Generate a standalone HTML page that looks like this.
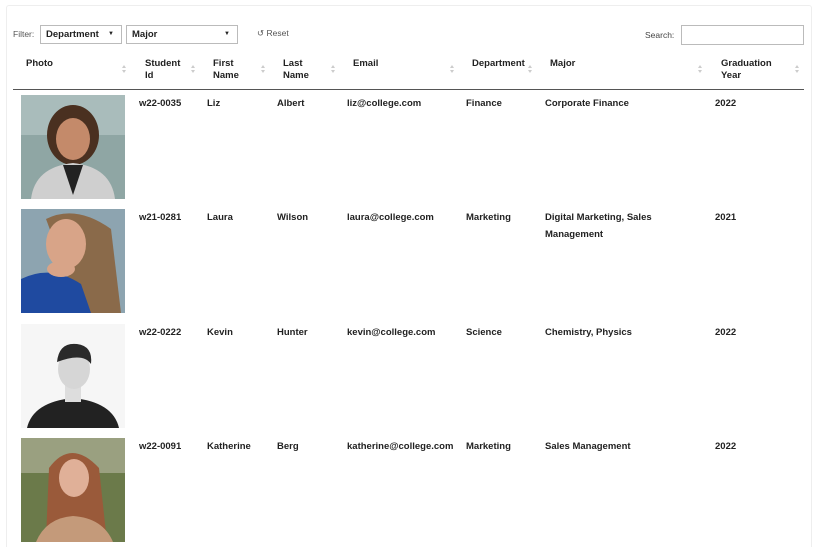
<!DOCTYPE html>
<html style="overflow:hidden;height:547px"><head><style>
*{margin:0;padding:0;box-sizing:border-box}
body{width:820px;height:547px;background:#fff;font-family:"Liberation Sans",sans-serif;color:#222;position:relative;overflow:hidden}
.card{position:absolute;left:6px;top:5px;width:806px;height:542px;border:1px solid #eee;border-bottom:none;border-radius:3px 3px 0 0}
.a{position:absolute;font-size:9.5px;font-weight:bold;line-height:13px;white-space:nowrap}
.h{position:absolute;font-size:9.5px;font-weight:bold;line-height:12px}
.s{position:absolute;width:5px;height:10px}
.s:before,.s:after{content:"";position:absolute;left:0;border-left:2.5px solid transparent;border-right:2.5px solid transparent}
.s:before{top:0;border-bottom:3px solid #ccc}
.s:after{top:5px;border-top:3px solid #ccc}
.sel{position:absolute;top:25px;height:19px;border:1px solid #bbb;font-size:9.5px;font-weight:bold;line-height:17px;padding-left:5px}
.sel span{position:absolute;right:7px;font-size:6px}
.ph{position:absolute;left:21px;width:104px;height:104px}
</style></head><body>
<div class="card"></div>
<div class="a" style="left:13px;top:28px;font-weight:normal;color:#555;font-size:8.5px">Filter:</div>
<div class="sel" style="left:40px;width:82px">Department<span>▼</span></div>
<div class="sel" style="left:126px;width:112px">Major<span>▼</span></div>
<div class="a" style="left:257px;top:27px;font-weight:normal;color:#555;font-size:8.5px">↺ Reset</div>
<div class="a" style="left:645px;top:29px;font-weight:normal;color:#444;font-size:8.5px">Search:</div>
<div style="position:absolute;left:681px;top:25px;width:123px;height:20px;border:1px solid #bbb"></div>

<div class="h" style="left:26px;top:58px">Photo</div>
<div class="h" style="left:145px;top:58px">Student<br>Id</div>
<div class="h" style="left:213px;top:58px">First<br>Name</div>
<div class="h" style="left:283px;top:58px">Last<br>Name</div>
<div class="h" style="left:353px;top:58px">Email</div>
<div class="h" style="left:472px;top:58px">Department</div>
<div class="h" style="left:550px;top:58px">Major</div>
<div class="h" style="left:721px;top:58px">Graduation<br>Year</div>
<div class="s" style="left:122px;top:65px"></div>
<div class="s" style="left:191px;top:65px"></div>
<div class="s" style="left:261px;top:65px"></div>
<div class="s" style="left:331px;top:65px"></div>
<div class="s" style="left:450px;top:65px"></div>
<div class="s" style="left:528px;top:65px"></div>
<div class="s" style="left:698px;top:65px"></div>
<div class="s" style="left:795px;top:65px"></div>
<div style="position:absolute;left:13px;top:89px;width:791px;height:1px;background:#555"></div>

<svg class="ph" style="top:95px" viewBox="0 0 104 104"><rect width="104" height="104" fill="#8fa6a4"/><rect width="104" height="40" fill="#a9bcbb"/><ellipse cx="52" cy="40" rx="26" ry="30" fill="#4a3020"/><ellipse cx="52" cy="44" rx="17" ry="21" fill="#c48a6a"/><path d="M10 104 Q14 72 52 68 Q90 72 94 104Z" fill="#cfcfcf"/><path d="M42 70 L52 100 L62 70Z" fill="#222"/></svg>
<svg class="ph" style="top:209px" viewBox="0 0 104 104"><rect width="104" height="104" fill="#8da4b0"/><path d="M25 10 Q55 -5 90 20 L100 104 L60 104Z" fill="#8a6a4a"/><ellipse cx="45" cy="35" rx="20" ry="25" fill="#d8a488"/><path d="M0 70 Q30 55 60 75 L70 104 L0 104Z" fill="#1f4aa0"/><ellipse cx="40" cy="60" rx="14" ry="8" fill="#d8a488"/></svg>
<svg class="ph" style="top:324px" viewBox="0 0 104 104"><rect width="104" height="104" fill="#f6f6f6"/><path d="M6 104 Q12 78 52 74 Q92 78 98 104Z" fill="#222"/><rect x="44" y="60" width="16" height="18" fill="#ddd"/><ellipse cx="53" cy="45" rx="16" ry="20" fill="#d6d6d6"/><path d="M36 38 Q38 18 56 20 Q72 22 70 40 Q62 28 36 38Z" fill="#2a2a2a"/></svg>
<svg class="ph" style="top:438px" viewBox="0 0 104 104"><rect width="104" height="104" fill="#6b7a4a"/><rect width="104" height="35" fill="#9aa080"/><path d="M28 30 Q50 0 78 30 L85 95 L25 100Z" fill="#9a5a3a"/><ellipse cx="53" cy="40" rx="15" ry="19" fill="#e0b098"/><path d="M15 104 Q25 80 52 78 Q82 80 92 104Z" fill="#c49a7a"/></svg>

<div class="a" style="left:139px;top:97px">w22-0035</div><div class="a" style="left:207px;top:97px">Liz</div><div class="a" style="left:277px;top:97px">Albert</div><div class="a" style="left:347px;top:97px">liz@college.com</div><div class="a" style="left:466px;top:97px">Finance</div><div class="a" style="left:545px;top:97px">Corporate Finance</div><div class="a" style="left:715px;top:97px">2022</div>
<div class="a" style="left:139px;top:211px">w21-0281</div><div class="a" style="left:207px;top:211px">Laura</div><div class="a" style="left:277px;top:211px">Wilson</div><div class="a" style="left:347px;top:211px">laura@college.com</div><div class="a" style="left:466px;top:211px">Marketing</div><div class="a" style="left:545px;top:209px;line-height:17px">Digital Marketing, Sales<br>Management</div><div class="a" style="left:715px;top:211px">2021</div>
<div class="a" style="left:139px;top:326px">w22-0222</div><div class="a" style="left:207px;top:326px">Kevin</div><div class="a" style="left:277px;top:326px">Hunter</div><div class="a" style="left:347px;top:326px">kevin@college.com</div><div class="a" style="left:466px;top:326px">Science</div><div class="a" style="left:545px;top:326px">Chemistry, Physics</div><div class="a" style="left:715px;top:326px">2022</div>
<div class="a" style="left:139px;top:440px">w22-0091</div><div class="a" style="left:207px;top:440px">Katherine</div><div class="a" style="left:277px;top:440px">Berg</div><div class="a" style="left:347px;top:440px">katherine@college.com</div><div class="a" style="left:466px;top:440px">Marketing</div><div class="a" style="left:545px;top:440px">Sales Management</div><div class="a" style="left:715px;top:440px">2022</div>
</body></html>
